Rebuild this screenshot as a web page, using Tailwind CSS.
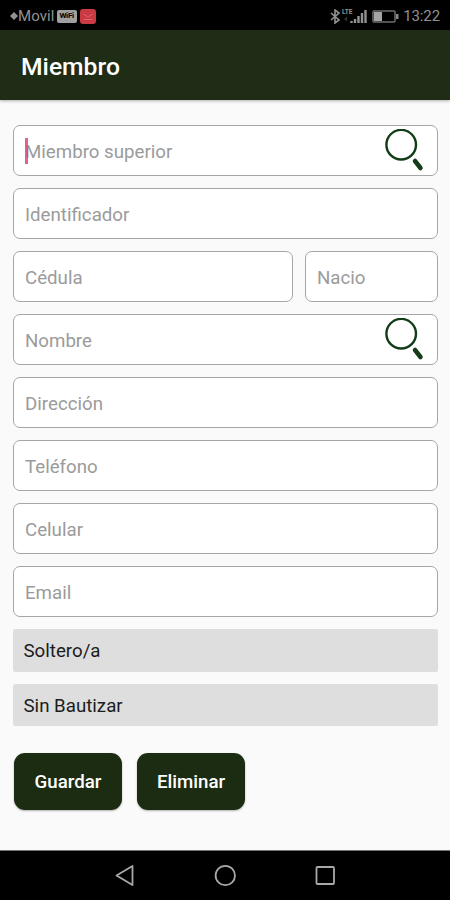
<!DOCTYPE html>
<html lang="es">
<head>
<meta charset="utf-8">
<title>Miembro</title>
<script src="https://cdn.jsdelivr.net/npm/@tailwindcss/browser@4"></script>
</head>
<body class="w-[450px] h-[900px] overflow-hidden bg-[#fafafa] font-[Roboto,sans-serif] flex flex-col">
  <div class="h-[30px] shrink-0 bg-black flex items-center justify-between pl-[10px] pr-[10px] pt-[2px] text-[#929292]">
    <div class="flex items-center text-[15px] leading-none">
      <svg class="w-[8px] h-[8px]" viewBox="0 0 8 8"><path d="M4 0L8 4L4 8L0 4Z" fill="#929292"/></svg>
      <span class="tracking-[0.1px]">Movil</span>
      <span class="ml-[2px] w-[20px] h-[13px] rounded-[2px] bg-[#a0a0a0] text-black text-[8px] font-bold flex items-center justify-center tracking-[-0.3px]">WiFi</span>
      <svg class="ml-[3px] w-[16px] h-[15px]" viewBox="0 0 16 15"><rect width="16" height="15" rx="3" fill="#c93a43"/><path d="M3.500 5L8 8L12.500 5M3.500 10.5H12.500" fill="none" stroke="#e2636b" stroke-width="1"/></svg>
    </div>
    <div class="flex items-center">
      <svg class="w-[10px] h-[15px]" viewBox="0 0 10 15"><path d="M1 4L9 11L5 14V1L9 4L1 11" fill="none" stroke="#929292" stroke-width="1.6"/></svg>
      <svg class="ml-[2px] w-[26px] h-[16px]" viewBox="0 0 26 16"><text x="0" y="6" font-size="8" font-weight="700" textLength="10.500" lengthAdjust="spacingAndGlyphs" fill="#929292">LTE</text><path d="M2 11L5 8.5V13.500Z" fill="#333"/><path d="M9.500 13v2M13 11v4M16.500 8v7M20 5v10M23.500 2v13" stroke="#929292" stroke-width="2.400"/></svg>
      <svg class="ml-[4px] w-[27px] h-[13px]" viewBox="0 0 27 13"><rect x="1" y="1" width="22" height="11" rx="1" fill="none" stroke="#6f6f6f" stroke-width="1.500"/><rect x="2" y="2" width="8" height="9" fill="#a4a4a4"/><rect x="24" y="4" width="2.500" height="5" fill="#8a8a8a"/></svg>
      <span class="ml-[4px] text-[15px] leading-none tracking-[-0.1px]">13:22</span>
    </div>
  </div>
  <header class="h-[70px] shrink-0 bg-[#1f2d16] shadow-[0_1px_3px_rgba(0,0,0,0.3)] flex items-center pl-[21px] pt-[4px]">
    <h1 class="text-white text-[24.7px] font-medium leading-none">Miembro</h1>
  </header>
  <main class="flex-1 flex flex-col pl-[13px] pr-[12px] pt-[25px] text-[18.7px] text-[#9b9b9b] leading-none">
    <div class="flex flex-col gap-[12px]">
      <div class="h-[51px] border border-[#a6a6a6] rounded-[7px] bg-white flex items-center justify-between pl-[11px] pr-[13px]">
        <div class="relative pt-[3px]">Miembro superior<span class="absolute left-0 top-[-2px] w-[3px] h-[26px] bg-[#e0457d]/85"></span></div>
        <svg class="w-[41px] h-[44px]" viewBox="0 0 41 44"><circle cx="18.200" cy="15.700" r="14.800" fill="none" stroke="#123d18" stroke-width="2.400"/><path d="M32 32L37.500 39" stroke="#123d18" stroke-width="4.500" stroke-linecap="round"/></svg>
      </div>
      <div class="h-[51px] border border-[#a6a6a6] rounded-[7px] bg-white flex items-center pl-[11px] pt-[3px]">Identificador</div>
      <div class="flex gap-[12px]">
        <div class="w-[280px] h-[51px] border border-[#a6a6a6] rounded-[7px] bg-white flex items-center pl-[11px] pt-[3px]">Cédula</div>
        <div class="flex-1 h-[51px] border border-[#a6a6a6] rounded-[7px] bg-white flex items-center pl-[11px] pt-[3px]">Nacio</div>
      </div>
      <div class="h-[51px] border border-[#a6a6a6] rounded-[7px] bg-white flex items-center justify-between pl-[11px] pr-[13px]">
        <div class="pt-[3px]">Nombre</div>
        <svg class="w-[41px] h-[44px]" viewBox="0 0 41 44"><circle cx="18.200" cy="15.700" r="14.800" fill="none" stroke="#123d18" stroke-width="2.400"/><path d="M32 32L37.500 39" stroke="#123d18" stroke-width="4.500" stroke-linecap="round"/></svg>
      </div>
      <div class="h-[51px] border border-[#a6a6a6] rounded-[7px] bg-white flex items-center pl-[11px] pt-[3px]">Dirección</div>
      <div class="h-[51px] border border-[#a6a6a6] rounded-[7px] bg-white flex items-center pl-[11px] pt-[3px]">Teléfono</div>
      <div class="h-[51px] border border-[#a6a6a6] rounded-[7px] bg-white flex items-center pl-[11px] pt-[3px]">Celular</div>
      <div class="h-[51px] border border-[#a6a6a6] rounded-[7px] bg-white flex items-center pl-[11px] pt-[3px]">Email</div>
      <div class="h-[43px] bg-[#dedede] rounded-[2px] flex items-center pl-[10.5px] pt-px text-[#1c1c1c]">Soltero/a</div>
      <div class="h-[42px] bg-[#dedede] rounded-[2px] flex items-center pl-[10.5px] pt-[2px] text-[#1c1c1c]">Sin Bautizar</div>
    </div>
    <div class="mt-[27px] pl-px flex gap-[15px] text-white font-medium">
      <div class="w-[108px] h-[57px] rounded-[11px] bg-[#1c2c12] shadow-[0_1px_2px_rgba(0,0,0,0.3)] flex items-center justify-center pt-[2px]">Guardar</div>
      <div class="w-[108px] h-[57px] rounded-[11px] bg-[#1c2c12] shadow-[0_1px_2px_rgba(0,0,0,0.3)] flex items-center justify-center pt-[2px]">Eliminar</div>
    </div>
  </main>
  <nav class="h-[50px] shrink-0 bg-black border-t border-[#777] flex items-center justify-center gap-[76px]">
    <svg class="w-[24px] h-[24px]" viewBox="0 0 24 24"><path d="M3.500 11.500L19.500 2V21Z" fill="none" stroke="#a8a8a8" stroke-width="1.800" stroke-linejoin="round"/></svg>
    <svg class="w-[24px] h-[24px]" viewBox="0 0 24 24"><circle cx="12.300" cy="11.500" r="9.700" fill="none" stroke="#a8a8a8" stroke-width="1.800"/></svg>
    <svg class="w-[24px] h-[24px]" viewBox="0 0 24 24"><rect x="3.500" y="3" width="17.500" height="17" rx="1" fill="none" stroke="#a8a8a8" stroke-width="1.800"/></svg>
  </nav>
</body>
</html>
